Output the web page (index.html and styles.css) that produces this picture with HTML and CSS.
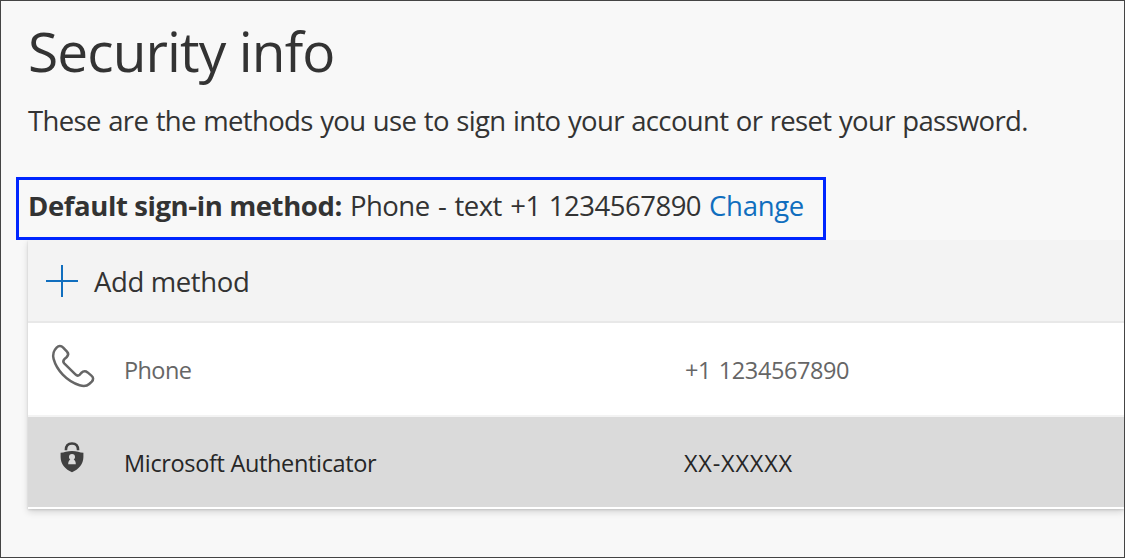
FILE: index.html
```html
<!DOCTYPE html>
<html lang="en">
<head>
<meta charset="utf-8">
<title>Security info</title>
<link rel="stylesheet" href="styles.css">
</head>
<body>
<main class="page">
  <h1 class="title"><span>Security info</span></h1>
  <p class="intro"><span>These are the methods you use to sign into your account or reset your password.</span></p>
  <div class="default-method">
    <strong class="default-label">Default sign-in method:</strong>
    <span class="default-value">Phone - text +1 1234567890</span>
    <a class="change">Change</a>
  </div>
  <section class="card">
    <div class="add">
      <svg class="plus" viewBox="0 0 32 32" width="32" height="32"><path d="M0 16h32M16 0v32" stroke="#106ebe" stroke-width="2" fill="none"/></svg>
      <span class="add-label">Add method</span>
    </div>
    <div class="row">
      <svg class="icon" viewBox="50 343 46 46" width="46" height="46"><path d="M56.6 347.6C58.6 345.6 61.2 345.6 63.2 347.6L67 351.6C68.6 353.4 68.4 355.4 66.8 357L64.4 359.2C63 360.6 63 362 64.2 363.4L75.4 374.4C76.8 375.8 78.4 376 79.8 374.6L81.2 373C83.2 371 85.6 370.8 87.6 372.4L91.4 375.6C93.6 377.4 93.6 379.6 91.8 381.6L89.2 384C87 386 83.6 386.4 79.6 385.2C66.4 381 56.6 369.8 53.6 358.8C52.4 354 53.2 351 56.6 347.6Z" fill="none" stroke="#666" stroke-width="2.5" stroke-linejoin="round"/></svg>
      <span class="name name-phone">Phone</span>
      <span class="value value-phone">+1 1234567890</span>
    </div>
    <div class="row row-selected">
      <svg class="icon" viewBox="50 434 46 46" width="46" height="46">
        <path d="M65.9 450.2C65.9 445.8 68.2 443.5 72 443.5S78.1 445.8 78.1 450.2" fill="none" stroke="#404040" stroke-width="2.6"/>
        <path d="M60.6 452.8C64 452.6 67.6 451 72 451S80 452.6 83.4 452.8V457C83.4 464 78.6 469.4 72 472.2C65.4 469.4 60.6 464 60.6 457Z" fill="#404040"/>
        <path d="M68.2 464.2C68.2 461.5 69 460.3 70.3 459.5C69.3 458.8 69 458 69 457A3 2.900 0 0 1 75 457C75 458 74.7 458.8 73.7 459.5C75 460.3 75.8 461.5 75.8 464.2Z" fill="#dadada"/>
      </svg>
      <span class="name name-auth">Microsoft Authenticator</span>
      <span class="value value-auth">XX-XXXXX</span>
    </div>
  </section>
</main>
</body>
</html>
```
FILE: styles.css
```css
* { box-sizing: border-box; }
body {
  margin: 0;
  background: #f8f8f8;
  color: #333;
  font-family: "Open Sans", "Noto Sans", sans-serif;
}
.page {
  height: 558px;
  border: 1px solid #444;
  padding: 15px 0 0 15px;
  overflow: hidden;
}
.title {
  margin: 0 0 16px;
  padding-left: 12px;
  font-size: 55px;
  line-height: 70px;
  font-weight: 370;
  letter-spacing: -0.9px;
}
.intro {
  margin: 0 0 37px;
  padding-left: 12px;
  font-size: 27.5px;
  font-weight: 380;
  line-height: 38px;
  letter-spacing: -0.66px;
  word-spacing: 1px;
  white-space: nowrap;
}
.default-method {
  display: flex;
  gap: 8px;
  width: 810px;
  height: 63px;
  border: 3px solid #0026ff;
  padding-left: 9px;
  font-size: 27.5px;
  font-weight: 380;
  line-height: 52px;
  white-space: nowrap;
}
.default-label { font-weight: 700; letter-spacing: -0.4px; }
.default-value { letter-spacing: -0.5px; word-spacing: 1.6px; }
.change { color: #106ebe; letter-spacing: -0.3px; }
.card {
  margin-left: 12px;
  background: #fff;
  border-bottom: 2px solid #fff;
  box-shadow: 0 3px 7px rgba(0, 0, 0, 0.14), 0 1px 2px rgba(0, 0, 0, 0.13);
  clip-path: inset(0 0 -20px -20px);
}
.add {
  display: flex;
  height: 83px;
  padding: 25px 0 0 18px;
  gap: 16px;
  background: #f3f3f3;
  border-bottom: 2px solid #e8e8e8;
}
.add-label { font-size: 27.5px; font-weight: 380; line-height: 34px; letter-spacing: -0.37px; }
.row {
  display: grid;
  grid-template-columns: 74px 560px 1fr;
  height: 94px;
  padding: 20px 0 0 22px;
  border-bottom: 2px solid #f3f3f3;
  color: #666;
  font-size: 23.5px;
  line-height: 55px;
}
.row-selected {
  height: 90px;
  padding-top: 17px;
  border: 0;
  background: #dadada;
  color: #262626;
  line-height: 59px;
}
.name-phone { letter-spacing: -0.6px; }
.value-phone { padding-left: 1px; letter-spacing: -0.4px; word-spacing: 2px; }
.name-auth { letter-spacing: -0.34px; }
.value-auth { letter-spacing: 0.8px; }
```
